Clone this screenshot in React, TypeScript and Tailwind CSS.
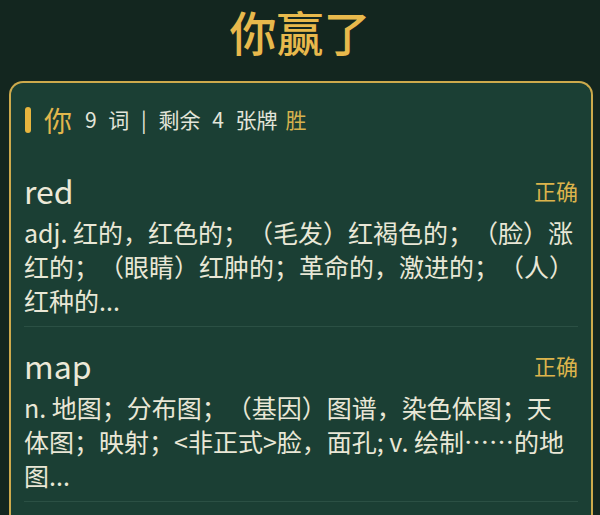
import React from "react";

type WordResult = {
  word: string;
  status: string;
  definition: string;
};

// 释义里的 \n 是原样式中的折行位置
const RESULTS: WordResult[] = [
  {
    word: "red",
    status: "正确",
    definition:
      "adj. 红的，红色的；（毛发）红褐色的；（脸）涨红的；（眼睛）红肿的；革命的，激进的；（人）红种的...",
  },
  {
    word: "map",
    status: "正确",
    definition:
      "n. 地图；分布图；（基因）图谱，染色体图；天\n体图；映射；<非正式>脸，面孔; v. 绘制……的地图...",
  },
];

function ResultRow({ item }: { item: WordResult }) {
  return (
    <div className="pt-[20px] pb-[9px] border-b border-[#2b5044]">
      <div className="flex items-center justify-between h-[36px]">
        <span className="text-[32px] leading-[36px] text-[#ece9d8]">
          {item.word}
        </span>
        <span className="text-[22px] text-[#dcb44c]">{item.status}</span>
      </div>
      <p className="mt-[7px] whitespace-pre-line text-[25px] leading-[34px] text-[#e9e7d6]">
        {item.definition}
      </p>
    </div>
  );
}

export default function App() {
  return (
    <div
      className="min-h-screen w-full bg-[#13261f] [text-spacing-trim:space-all]"
      style={{ fontFamily: '"Noto Sans CJK SC", "Noto Sans", sans-serif' }}
    >
      <div className="pt-[2px] h-[60px] flex items-center justify-center">
        <h1 className="text-[47px] leading-[58px] font-medium text-[#e8b94c]">
          你赢了
        </h1>
      </div>

      <div className="mt-[21px] ml-[9px] w-[584px] rounded-t-[14px] border-2 border-b-0 border-[#cdaa4c] bg-[#1b3f34] px-[13px] pt-[17px] pb-[14px]">
        <div className="flex items-center h-[40px]">
          <span className="ml-[1px] w-[6px] h-[26px] rounded-full bg-[#e8b53e]" />
          <span className="ml-[13px] text-[28px] leading-none text-[#e2b74c]">
            你
          </span>
          <span className="ml-[13px] text-[21px] text-[#e3e5da] [word-spacing:7px]">
            9 词 | 剩余 4 张牌
          </span>
          <span className="ml-[8px] text-[21px] text-[#d6b24e]">胜</span>
        </div>

        <div className="mt-[12px]">
          {RESULTS.map((item) => (
            <ResultRow key={item.word} item={item} />
          ))}
        </div>
      </div>
    </div>
  );
}
